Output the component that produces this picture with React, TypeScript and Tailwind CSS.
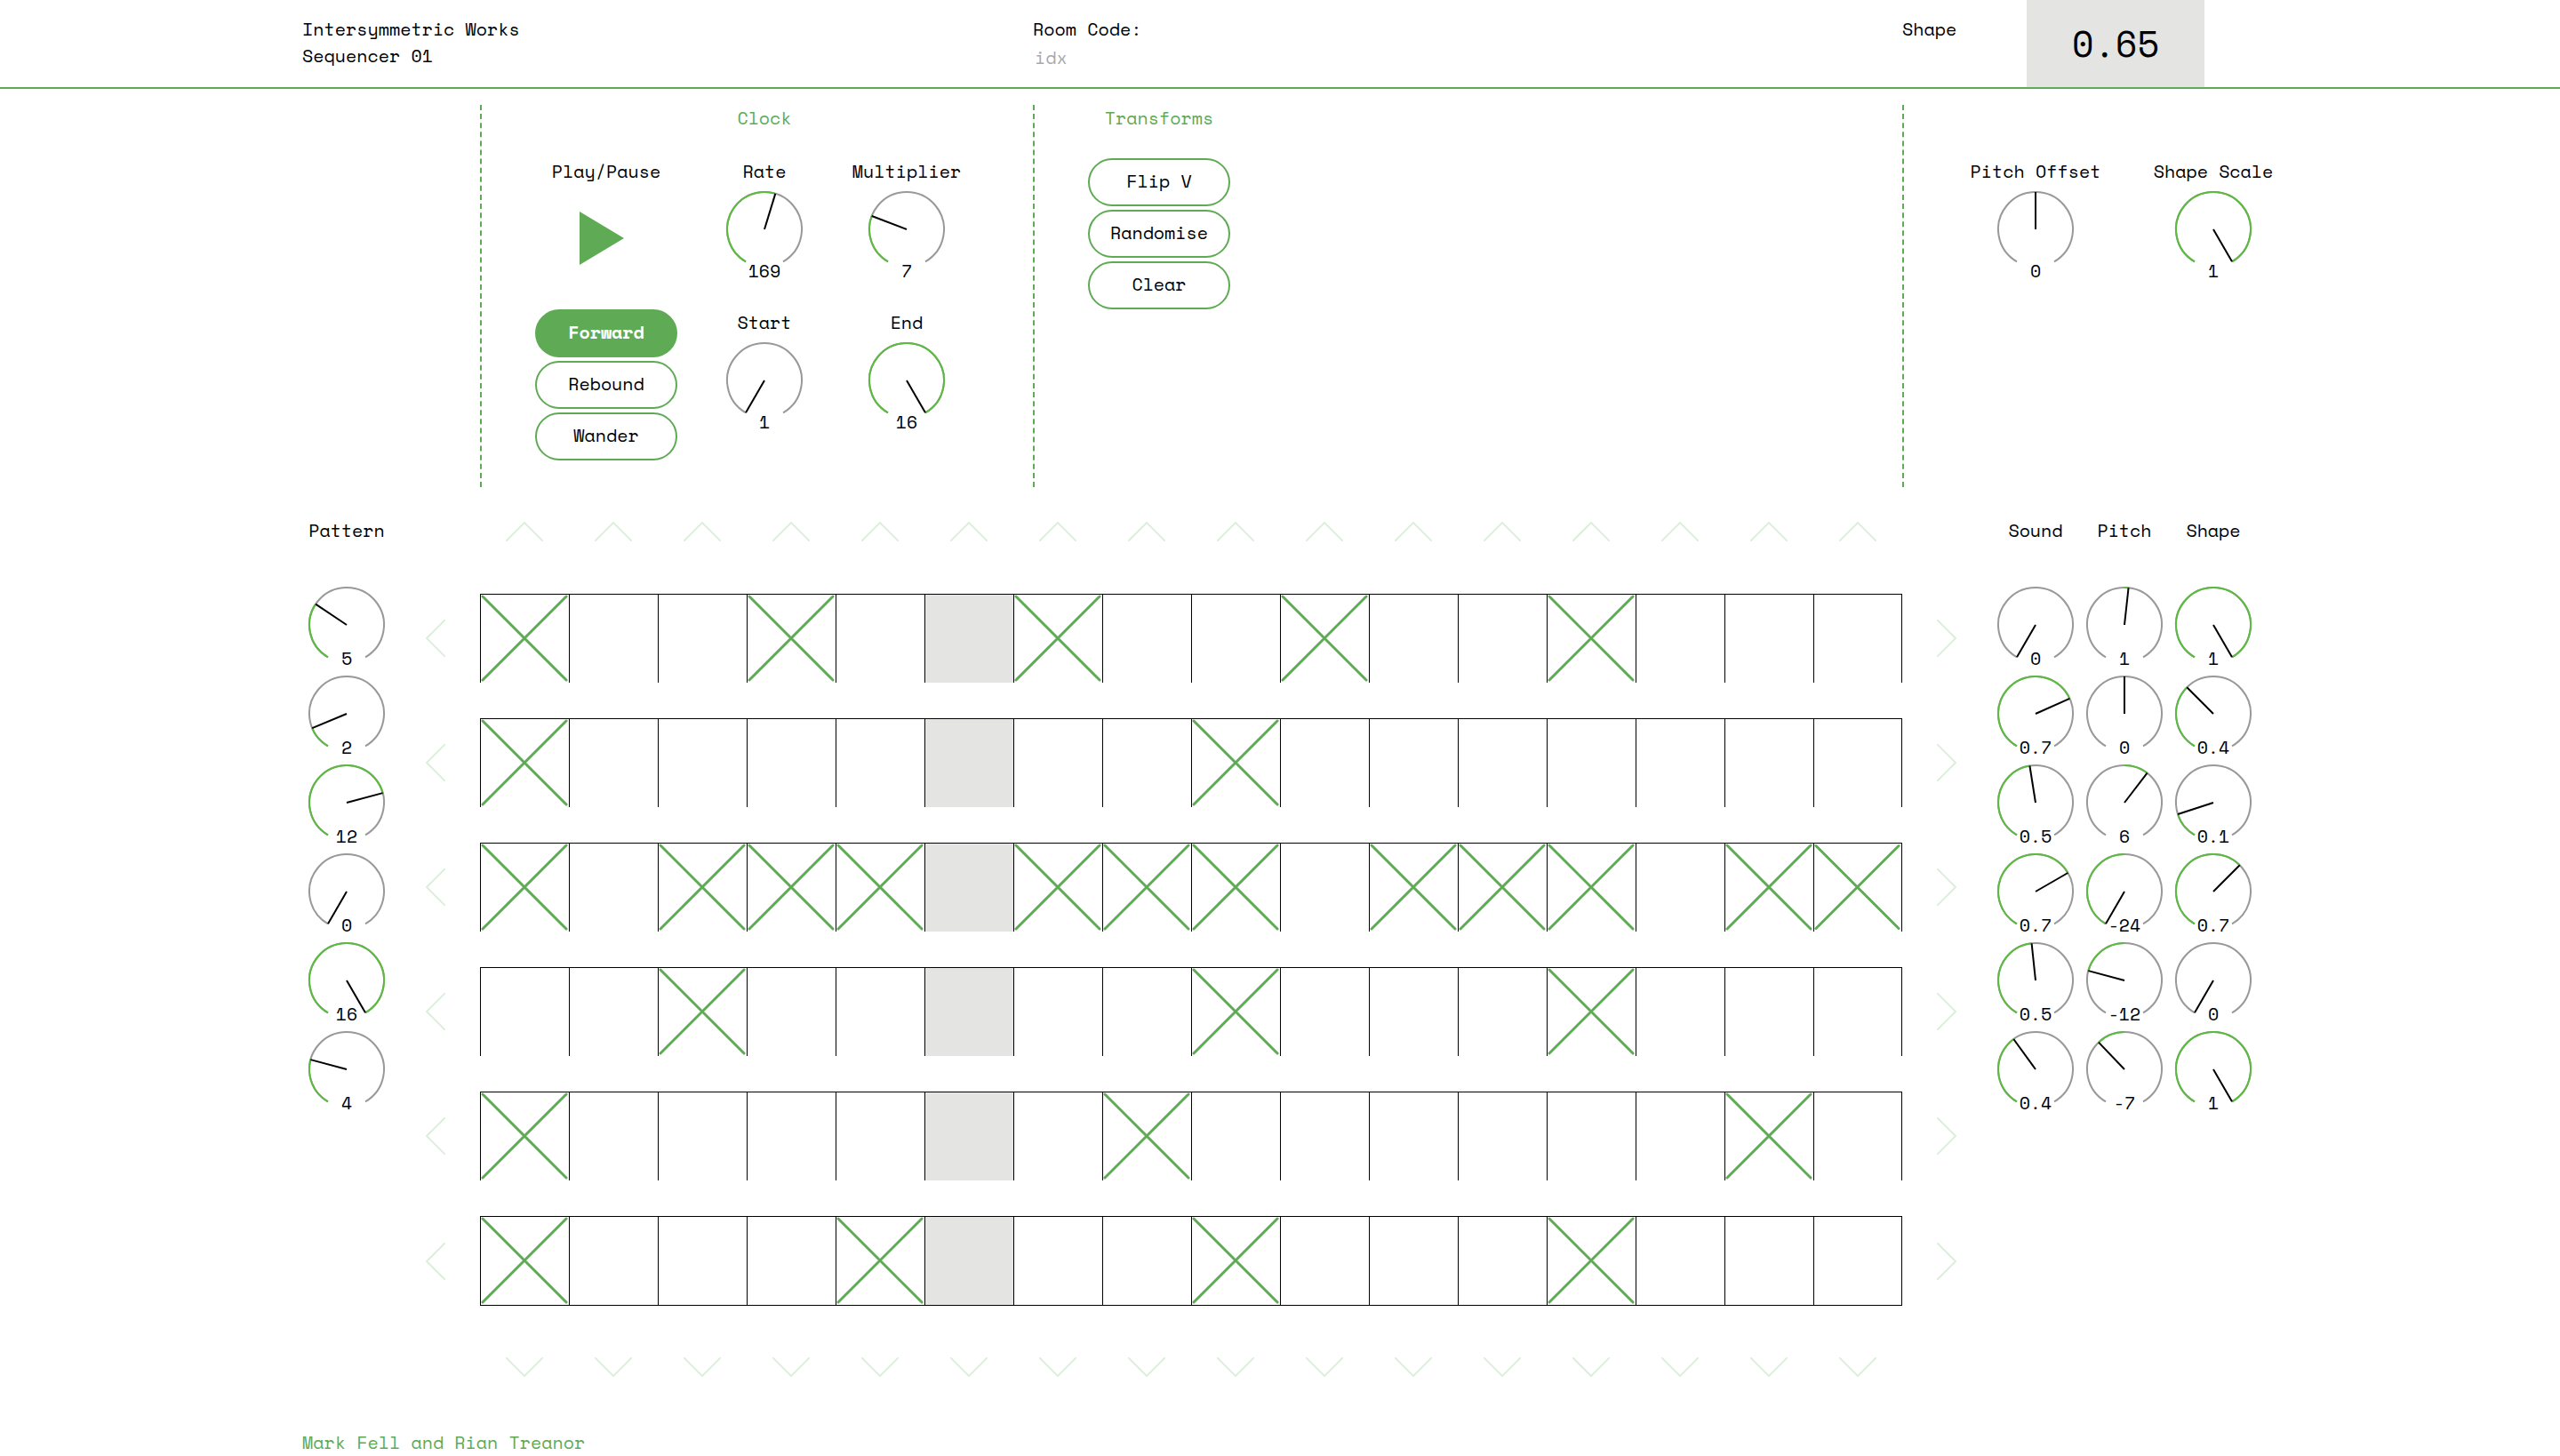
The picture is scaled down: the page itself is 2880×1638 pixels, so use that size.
import { useState } from "react";
import clsx from "clsx";

const STEPS = 16;
const PLAYHEAD = 5;

const INITIAL_PATTERN: number[][] = [
  [0, 3, 6, 9, 12],
  [0, 8],
  [0, 2, 3, 4, 6, 7, 8, 10, 11, 12, 14, 15],
  [2, 8, 12],
  [0, 7, 14],
  [0, 4, 8, 12],
];

type KnobData = { value: string; angle: number };

const PATTERN_KNOBS: KnobData[] = [5, 2, 12, 0, 16, 4].map((n) => ({
  value: String(n),
  angle: -150 + (300 * n) / 16,
}));

const SOUND_KNOBS: KnobData[] = [
  { value: "0", angle: -150 },
  { value: "0.7", angle: 66 },
  { value: "0.5", angle: -9 },
  { value: "0.7", angle: 60 },
  { value: "0.5", angle: -6 },
  { value: "0.4", angle: -36 },
];

const PITCH_KNOBS: KnobData[] = [1, 0, 6, -24, -12, -7].map((n) => ({
  value: String(n),
  angle: (150 * n) / 24,
}));

const SHAPE_KNOBS: KnobData[] = [
  { value: "1", angle: 150 },
  { value: "0.4", angle: -45 },
  { value: "0.1", angle: -108 },
  { value: "0.7", angle: 45 },
  { value: "0", angle: -150 },
  { value: "1", angle: 150 },
];

/** Point on the dial, with 0 degrees at the top and positive angles clockwise. */
function point(angle: number) {
  const rad = (angle * Math.PI) / 180;
  return `${(48 + 42 * Math.sin(rad)).toFixed(2)} ${(48 - 42 * Math.cos(rad)).toFixed(2)}`;
}

function arc(from: number, to: number) {
  return `M ${point(from)} A 42 42 0 ${to - from > 180 ? 1 : 0} 1 ${point(to)}`;
}

type KnobProps = KnobData & { name: string; bipolar?: boolean; compact?: boolean };

function Knob({ name, value, angle, bipolar = false, compact = false }: KnobProps) {
  const origin = bipolar ? 0 : -150;
  const from = Math.min(origin, angle);
  const to = Math.max(origin, angle);
  return (
    <div className={clsx("relative flex w-24 flex-col items-center", compact && "h-25")}>
      <svg viewBox="0 0 96 96" className="block size-24 shrink-0" fill="none" strokeWidth="2" aria-hidden="true">
        <path d={arc(-150, 150)} stroke="#999999" />
        {to > from && <path d={arc(from, to)} stroke="#5bbb3f" />}
        <path d={`M 48 48 L ${point(angle)}`} stroke="#000000" />
      </svg>
      <span className={compact ? "-mt-[25px]" : "-mt-4"}>{value}</span>
      <input
        type="range"
        aria-label={name}
        min={-150}
        max={150}
        defaultValue={angle}
        className="absolute inset-0 size-full cursor-pointer opacity-0"
      />
    </div>
  );
}

function LabelledKnob(props: KnobProps) {
  return (
    <div className="flex flex-col items-center gap-0.5">
      <span className="whitespace-nowrap">{props.name}</span>
      <Knob {...props} />
    </div>
  );
}

function KnobColumn({ title, knobs, bipolar }: { title: string; knobs: KnobData[]; bipolar?: boolean }) {
  return (
    <section className="flex flex-col items-center pt-[34px]">
      <h2>{title}</h2>
      <div className="mt-[43px] flex flex-col">
        {knobs.map((k, i) => (
          <Knob key={i} name={`${title} ${i + 1}`} bipolar={bipolar} compact {...k} />
        ))}
      </div>
    </section>
  );
}

function PillButton({ label, active = false, onClick }: { label: string; active?: boolean; onClick?: () => void }) {
  return (
    <button
      type="button"
      onClick={onClick}
      className={clsx(
        "flex h-[54px] w-40 cursor-pointer items-center justify-center rounded-full border-2 border-[#5faa54] pb-0.5",
        active ? "bg-[#5faa54] font-bold text-white" : "bg-white",
      )}
    >
      {label}
    </button>
  );
}

const CHEVRONS = {
  up: { box: "0 0 42 22", d: "M1 21 L21 1 L41 21", size: "h-[22px] w-[42px]" },
  down: { box: "0 0 42 22", d: "M1 1 L21 21 L41 1", size: "h-[22px] w-[42px]" },
  left: { box: "0 0 22 42", d: "M21 1 L1 21 L21 41", size: "h-[42px] w-[22px]" },
  right: { box: "0 0 22 42", d: "M1 1 L21 21 L1 41", size: "h-[42px] w-[22px]" },
};

function Shift({ dir, label, onClick }: { dir: keyof typeof CHEVRONS; label: string; onClick?: () => void }) {
  const c = CHEVRONS[dir];
  return (
    <button type="button" aria-label={label} onClick={onClick} className="flex cursor-pointer items-center justify-center">
      <svg
        viewBox={c.box}
        className={c.size}
        fill="none"
        stroke="#dceedb"
        strokeWidth="2"
        strokeLinecap="round"
        strokeLinejoin="round"
        aria-hidden="true"
      >
        <path d={c.d} />
      </svg>
    </button>
  );
}

const toGrid = (rows: number[][]) =>
  rows.map((row) => Array.from({ length: STEPS }, (_, i) => row.includes(i)));

const COLUMNS = Array.from({ length: STEPS }, (_, i) => i);
const TOP_GRID = "mx-auto grid w-full max-w-[2200px] grid-cols-[200px_622px_minmax(0,1fr)_400px]";

export default function App() {
  const [grid, setGrid] = useState(() => toGrid(INITIAL_PATTERN));
  const [mode, setMode] = useState("Forward");

  const toggle = (r: number, c: number) =>
    setGrid((g) => g.map((row, i) => (i === r ? row.map((on, j) => (j === c ? !on : on)) : row)));

  const rotateRow = (r: number, by: number) =>
    setGrid((g) => g.map((row, i) => (i === r ? row.map((_, j) => row[(j - by + STEPS) % STEPS]) : row)));

  const rotateColumn = (c: number, by: number) =>
    setGrid((g) => g.map((row, i) => row.map((on, j) => (j === c ? g[(i - by + g.length) % g.length][j] : on))));

  return (
    <div className="bg-white font-['Space_Mono','Liberation_Mono',monospace] text-[20px] leading-[30px] text-black">
      <header className="border-b-2 border-[#5faa54]">
        <div className={clsx(TOP_GRID, "h-[98px]")}>
          <h1 className="col-span-2 pt-[18px]">
            Intersymmetric Works
            <br />
            Sequencer 01
          </h1>
          <div className="flex flex-col items-start pt-[18px]">
            <label htmlFor="room">Room Code:</label>
            <input
              id="room"
              type="text"
              placeholder="idx"
              className="mt-0.5 h-[30px] w-60 px-0.5 outline-none placeholder:text-[#a9a9a9]"
            />
          </div>
          <div className="grid grid-cols-[140px_200px]">
            <span className="pt-[18px]">Shape</span>
            <output className="flex items-center justify-center bg-[#e4e4e2] text-[40px]">0.65</output>
          </div>
        </div>
      </header>

      <main>
        <div className={clsx(TOP_GRID, "pt-[18px]")}>
          <section className="col-start-2 border-l-2 border-dashed border-[#5faa54] pb-[30px] pl-[60px]">
            <div className="grid grid-cols-[178px_160px_160px]">
              <h2 className="col-start-2 text-center text-[#5faa54]">Clock</h2>
            </div>
            <div className="mt-[30px] grid grid-cols-[178px_160px_160px]">
              <div className="flex w-40 flex-col items-center">
                <span>Play/Pause</span>
                <button type="button" aria-label="Play/Pause" className="mt-[30px] cursor-pointer">
                  <svg viewBox="0 0 60 60" className="block size-15" fill="#5faa54" aria-hidden="true">
                    <path d="M0 0 L50 30 L0 60 Z" />
                  </svg>
                </button>
                <div className="mt-[50px] flex flex-col gap-1">
                  {["Forward", "Rebound", "Wander"].map((m) => (
                    <PillButton key={m} label={m} active={m === mode} onClick={() => setMode(m)} />
                  ))}
                </div>
              </div>
              <div className="flex flex-col gap-7">
                <LabelledKnob name="Rate" value="169" angle={17} />
                <LabelledKnob name="Start" value="1" angle={-150} />
              </div>
              <div className="flex flex-col gap-7">
                <LabelledKnob name="Multiplier" value="7" angle={-69} />
                <LabelledKnob name="End" value="16" angle={150} />
              </div>
            </div>
          </section>

          <section className="border-l-2 border-dashed border-[#5faa54] pl-[60px]">
            <div className="flex w-40 flex-col items-center gap-[30px]">
              <h2 className="text-[#5faa54]">Transforms</h2>
              <div className="flex flex-col gap-1">
                <PillButton label="Flip V" onClick={() => setGrid((g) => [...g].reverse())} />
                <PillButton
                  label="Randomise"
                  onClick={() => setGrid((g) => g.map((row) => row.map(() => Math.random() < 0.3)))}
                />
                <PillButton label="Clear" onClick={() => setGrid(toGrid([[], [], [], [], [], []]))} />
              </div>
            </div>
          </section>

          <section className="border-l-2 border-dashed border-[#5faa54] pt-15">
            <div className="-ml-0.5 grid grid-cols-4">
              <div className="col-start-2 flex flex-col items-center">
                <LabelledKnob name="Pitch Offset" value="0" angle={0} bipolar />
              </div>
              <div className="col-start-4 flex flex-col items-center">
                <LabelledKnob name="Shape Scale" value="1" angle={150} />
              </div>
            </div>
          </section>
        </div>

        <div className="mx-auto grid w-full max-w-[2200px] grid-cols-[repeat(22,minmax(0,1fr))]">
          <KnobColumn title="Pattern" knobs={PATTERN_KNOBS} />

          <section aria-label="Steps" className="col-span-18 flex flex-col pt-[39px]">
            <div className="grid grid-cols-[repeat(18,minmax(0,1fr))]">
              <span />
              {COLUMNS.map((c) => (
                <Shift key={c} dir="up" label={`Shift step ${c + 1} up`} onClick={() => rotateColumn(c, -1)} />
              ))}
            </div>

            <div className="mt-[59px] flex flex-col gap-10">
              {grid.map((row, r) => (
                <div key={r} className="grid h-25 grid-cols-[repeat(18,minmax(0,1fr))]">
                  <Shift dir="left" label={`Shift row ${r + 1} left`} onClick={() => rotateRow(r, -1)} />
                  {row.map((on, c) => (
                    <button
                      key={c}
                      type="button"
                      aria-label={`Row ${r + 1}, step ${c + 1}`}
                      aria-pressed={on}
                      onClick={() => toggle(r, c)}
                      className={clsx(
                        "cursor-pointer border-t border-l border-black",
                        c === STEPS - 1 && "border-r",
                        r === grid.length - 1 && "border-b",
                        c === PLAYHEAD && "bg-[#e4e4e2]",
                      )}
                    >
                      {on && (
                        <svg
                          viewBox="0 0 100 100"
                          className="block size-full"
                          stroke="#5faa54"
                          strokeWidth="3"
                          strokeLinecap="round"
                          aria-hidden="true"
                        >
                          <path d="M2 2 L97 97 M97 2 L2 97" />
                        </svg>
                      )}
                    </button>
                  ))}
                  <Shift dir="right" label={`Shift row ${r + 1} right`} onClick={() => rotateRow(r, 1)} />
                </div>
              ))}
            </div>

            <div className="mt-[59px] grid grid-cols-[repeat(18,minmax(0,1fr))]">
              <span />
              {COLUMNS.map((c) => (
                <Shift key={c} dir="down" label={`Shift step ${c + 1} down`} onClick={() => rotateColumn(c, 1)} />
              ))}
            </div>
          </section>

          <KnobColumn title="Sound" knobs={SOUND_KNOBS} />
          <KnobColumn title="Pitch" knobs={PITCH_KNOBS} bipolar />
          <KnobColumn title="Shape" knobs={SHAPE_KNOBS} />
        </div>
      </main>

      <footer className="mx-auto mt-[62px] w-full max-w-[2200px] leading-6 text-[#5faa54]">Mark Fell and Rian Treanor</footer>
    </div>
  );
}
